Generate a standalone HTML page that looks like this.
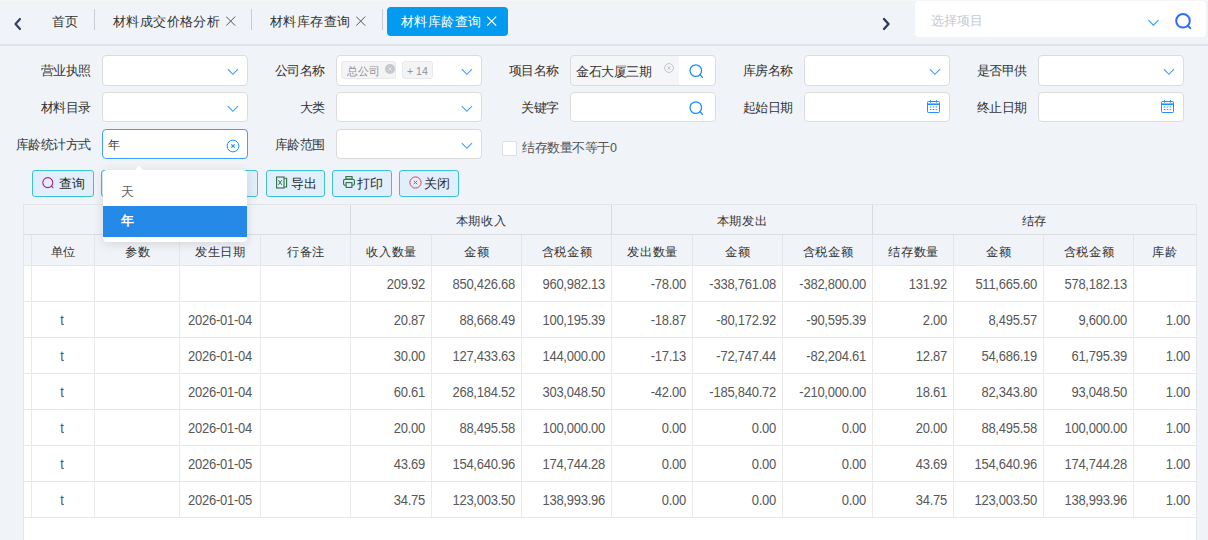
<!DOCTYPE html>
<html><head><meta charset="utf-8">
<style>
*{box-sizing:border-box;margin:0;padding:0}
html,body{width:1208px;height:540px;overflow:hidden;background:#f0f3f8;font-family:"Liberation Sans",sans-serif;color:#333;font-size:13px}
.a{position:absolute}
.tabtxt{top:13px;font-size:13px;line-height:18px;color:#333;white-space:nowrap;transform:scale(1.03);transform-origin:0 50%}
.sep{top:9px;width:1px;height:21px;background:#c9ccd2}
.x{width:10px;height:10px}
.lbl{font-size:13px;line-height:16px;color:#333;white-space:nowrap;text-align:right;width:120px;transform:scale(0.965);transform-origin:100% 50%}
.inp{width:146px;height:31px;background:#fff;border:1px solid #dcdcdc;border-radius:4px}
.btn{top:170px;height:27px;background:#e1eefb;border:1px solid #3cc3d6;border-radius:3px}
.btxt{top:176px;font-size:13px;line-height:16px;color:#2b2b2b;white-space:nowrap;transform:scale(0.97);transform-origin:0 50%}
.tbl{left:23px;top:204px;width:1174px;height:336px;background:#fff;border-left:1px solid #e5e6e8;border-top:1px solid #e5e6e8;border-right:1px solid #e5e6e8}
.hd{background:#f0f3f8}
.vl{width:1px;background:#e8e9eb}
.hl{height:1px;background:#e5e6e8}
.th{font-size:13px;line-height:16px;color:#333;white-space:nowrap;text-align:center;transform:scale(0.975,0.95);transform-origin:50% 40%}
.td{font-size:13px;line-height:16px;color:#585858;white-space:nowrap;letter-spacing:-0.25px;transform:scaleY(1.08);transform-origin:50% 78%}
</style></head><body>
<div class="a" style="left:0;top:0;width:1208px;height:1px;background:#f6f6f6"></div>
<div class="a" style="left:0;top:44px;width:1208px;height:2px;background:#dfe4ea"></div>
<svg class="a" style="left:12px;top:16px" width="12" height="16" viewBox="0 0 12 16"><path d="M8 3 L3.5 8 L8 13" fill="none" stroke="#3a4268" stroke-width="2.2" stroke-linecap="round" stroke-linejoin="round"/></svg>
<div class="a tabtxt" style="left:52px">首页</div>
<div class="a sep" style="left:94px"></div>
<div class="a tabtxt" style="left:113px">材料成交价格分析</div>
<svg class="a x" style="left:226px;top:16px" viewBox="0 0 10 10"><path d="M0.2 0.6L9.2 9.6M9.2 0.6L0.2 9.6" stroke="#555" stroke-width="1.0"/></svg>
<div class="a sep" style="left:251px"></div>
<div class="a tabtxt" style="left:270px">材料库存查询</div>
<svg class="a x" style="left:356px;top:16px" viewBox="0 0 10 10"><path d="M0.2 0.6L9.2 9.6M9.2 0.6L0.2 9.6" stroke="#555" stroke-width="1.0"/></svg>
<div class="a sep" style="left:382px"></div>
<div class="a" style="left:387px;top:7px;width:121px;height:29px;background:#039bef;border-radius:4px"></div>
<div class="a tabtxt" style="left:401px;color:#fff">材料库龄查询</div>
<svg class="a x" style="left:487px;top:16px" viewBox="0 0 10 10"><path d="M0.2 0.6L9.2 9.6M9.2 0.6L0.2 9.6" stroke="#fff" stroke-width="1.1"/></svg>
<svg class="a" style="left:880px;top:16px" width="12" height="16" viewBox="0 0 12 16"><path d="M4 3 L8.5 8 L4 13" fill="none" stroke="#2d3561" stroke-width="2.3" stroke-linecap="round" stroke-linejoin="round"/></svg>
<div class="a" style="left:915px;top:1px;width:291px;height:36px;background:#fff;border-radius:4px"></div>
<div class="a" style="left:931px;top:12px;font-size:12.8px;line-height:18px;color:#c6cad2">选择项目</div>
<svg class="a" style="left:1147px;top:19px" width="13" height="8" viewBox="0 0 13 8"><path d="M1.4 1.2L6.4 6.2L11.4 1.2" fill="none" stroke="#2a9dff" stroke-width="1.1"/></svg>
<svg class="a" style="left:1175px;top:13px" width="18" height="18" viewBox="0 0 18 18"><circle cx="8" cy="7.8" r="6.8" fill="none" stroke="#2f6bff" stroke-width="2"/><path d="M12.9 12.7L15.3 15.1" stroke="#2f6bff" stroke-width="2" stroke-linecap="round"/></svg>
<div class="a lbl" style="left:-29px;top:62.6px">营业执照</div>
<div class="a inp" style="left:102px;top:55px;height:31px"></div>
<svg class="a" style="left:227px;top:68px" width="13" height="8" viewBox="0 0 13 8"><path d="M0.8 1.2L5.9 6.3L11 1.2" fill="none" stroke="#409eff" stroke-width="1.15"/></svg>
<div class="a lbl" style="left:205px;top:62.6px">公司名称</div>
<div class="a inp" style="left:336px;top:55px;height:31px"></div>
<svg class="a" style="left:461px;top:68px" width="13" height="8" viewBox="0 0 13 8"><path d="M0.8 1.2L5.9 6.3L11 1.2" fill="none" stroke="#409eff" stroke-width="1.15"/></svg>
<div class="a lbl" style="left:439px;top:62.6px">项目名称</div>
<div class="a inp" style="left:570px;top:55px;height:31px;background:linear-gradient(90deg,#f5f6f8 0,#f5f6f8 108px,#fff 108px)"></div>
<svg class="a" style="left:689px;top:64px" width="15" height="15" viewBox="0 0 15 15"><circle cx="6.8" cy="6.6" r="5.8" fill="none" stroke="#1e90ff" stroke-width="1.3"/><path d="M10.8 10.6L13.4 13.2" stroke="#1e90ff" stroke-width="1.3" stroke-linecap="round"/></svg>
<div class="a lbl" style="left:673px;top:62.6px">库房名称</div>
<div class="a inp" style="left:804px;top:55px;height:31px"></div>
<svg class="a" style="left:929px;top:68px" width="13" height="8" viewBox="0 0 13 8"><path d="M0.8 1.2L5.9 6.3L11 1.2" fill="none" stroke="#409eff" stroke-width="1.15"/></svg>
<div class="a lbl" style="left:907px;top:62.6px">是否甲供</div>
<div class="a inp" style="left:1038px;top:55px;height:31px"></div>
<svg class="a" style="left:1163px;top:68px" width="13" height="8" viewBox="0 0 13 8"><path d="M0.8 1.2L5.9 6.3L11 1.2" fill="none" stroke="#409eff" stroke-width="1.15"/></svg>
<div class="a lbl" style="left:-29px;top:99.6px">材料目录</div>
<div class="a inp" style="left:102px;top:92px;height:30px"></div>
<svg class="a" style="left:227px;top:105px" width="13" height="8" viewBox="0 0 13 8"><path d="M0.8 1.2L5.9 6.3L11 1.2" fill="none" stroke="#409eff" stroke-width="1.15"/></svg>
<div class="a lbl" style="left:205px;top:99.6px">大类</div>
<div class="a inp" style="left:336px;top:92px;height:30px"></div>
<svg class="a" style="left:461px;top:105px" width="13" height="8" viewBox="0 0 13 8"><path d="M0.8 1.2L5.9 6.3L11 1.2" fill="none" stroke="#409eff" stroke-width="1.15"/></svg>
<div class="a lbl" style="left:439px;top:99.6px">关键字</div>
<div class="a inp" style="left:570px;top:92px;height:30px"></div>
<svg class="a" style="left:689px;top:101px" width="15" height="15" viewBox="0 0 15 15"><circle cx="6.8" cy="6.6" r="5.8" fill="none" stroke="#1e90ff" stroke-width="1.3"/><path d="M10.8 10.6L13.4 13.2" stroke="#1e90ff" stroke-width="1.3" stroke-linecap="round"/></svg>
<div class="a lbl" style="left:673px;top:99.6px">起始日期</div>
<div class="a inp" style="left:804px;top:92px;height:30px"></div>
<svg class="a" style="left:927px;top:100px" width="13" height="13" viewBox="0 0 13 13"><rect x="0.5" y="1.5" width="12" height="11" rx="0.8" fill="none" stroke="#1e90ff" stroke-width="1"/><path d="M0.5 4.2H12.5" stroke="#1e90ff" stroke-width="1.6"/><path d="M3.5 0.2V2.6M9.5 0.2V2.6" stroke="#1e90ff" stroke-width="1"/><path d="M2.8 7H4.4M5.7 7H7.3M8.6 7H10.2M2.8 9.5H4.4M5.7 9.5H7.3M8.6 9.5H10.2" stroke="#1e90ff" stroke-width="0.9"/></svg>
<div class="a lbl" style="left:907px;top:99.6px">终止日期</div>
<div class="a inp" style="left:1038px;top:92px;height:30px"></div>
<svg class="a" style="left:1161px;top:100px" width="13" height="13" viewBox="0 0 13 13"><rect x="0.5" y="1.5" width="12" height="11" rx="0.8" fill="none" stroke="#1e90ff" stroke-width="1"/><path d="M0.5 4.2H12.5" stroke="#1e90ff" stroke-width="1.6"/><path d="M3.5 0.2V2.6M9.5 0.2V2.6" stroke="#1e90ff" stroke-width="1"/><path d="M2.8 7H4.4M5.7 7H7.3M8.6 7H10.2M2.8 9.5H4.4M5.7 9.5H7.3M8.6 9.5H10.2" stroke="#1e90ff" stroke-width="0.9"/></svg>
<div class="a lbl" style="left:-29px;top:136.6px">库龄统计方式</div>
<div class="a inp" style="left:102px;top:129px;height:30px;border-color:#409eff"></div>
<div class="a lbl" style="left:205px;top:136.6px">库龄范围</div>
<div class="a inp" style="left:336px;top:129px;height:30px"></div>
<svg class="a" style="left:461px;top:142px" width="13" height="8" viewBox="0 0 13 8"><path d="M0.8 1.2L5.9 6.3L11 1.2" fill="none" stroke="#409eff" stroke-width="1.15"/></svg>
<div class="a" style="left:341px;top:61px;width:55px;height:18px;background:#f4f4f5;border:1px solid #e9e9eb;border-radius:3px"></div>
<div class="a" style="left:347px;top:63px;font-size:11px;line-height:16px;color:#909399">总公司</div>
<svg class="a" style="left:385px;top:64px" width="10" height="10" viewBox="0 0 10 10"><circle cx="5" cy="5" r="5" fill="#c4c7ce"/><path d="M3.3 3.3L6.7 6.7M6.7 3.3L3.3 6.7" stroke="#e8e9ec" stroke-width="0.9"/></svg>
<div class="a" style="left:402px;top:61px;width:31px;height:18px;background:#f4f4f5;border:1px solid #e9e9eb;border-radius:3px"></div>
<div class="a" style="left:407px;top:63px;font-size:10.5px;line-height:16px;color:#909399">+ 14</div>
<div class="a" style="left:576px;top:64px;font-size:13px;line-height:16px;color:#333;transform:scale(0.965);transform-origin:0 50%">金石大厦三期</div>
<svg class="a" style="left:664px;top:63px" width="10" height="10" viewBox="0 0 10 10"><circle cx="5" cy="5" r="4.4" fill="none" stroke="#c0c4cc" stroke-width="1"/><path d="M3.3 3.3L6.7 6.7M6.7 3.3L3.3 6.7" stroke="#c0c4cc" stroke-width="1"/></svg>
<div class="a" style="left:108px;top:137px;font-size:13px;line-height:16px;color:#333;transform:scale(0.94);transform-origin:0 60%">年</div>
<svg class="a" style="left:226px;top:139px" width="14" height="14" viewBox="0 0 14 14"><circle cx="7" cy="7" r="5.9" fill="none" stroke="#1e90ff" stroke-width="1"/><path d="M5.3 5.3L8.7 8.7M8.7 5.3L5.3 8.7" stroke="#1e90ff" stroke-width="1.1"/></svg>
<div class="a" style="left:502px;top:141px;width:15px;height:15px;background:#fff;border:1px solid #dcdfe6;border-radius:2px"></div>
<div class="a" style="left:522px;top:140px;font-size:13px;line-height:16px;color:#555;transform:scale(0.966);transform-origin:0 50%">结存数量不等于0</div>
<div class="a btn" style="left:32px;width:62px"></div>
<svg class="a" style="left:42px;top:177px" width="13" height="13" viewBox="0 0 13 13"><circle cx="5.8" cy="5.6" r="5" fill="none" stroke="#b0208f" stroke-width="1.1"/><path d="M9.4 9.2L10.9 10.7" stroke="#b0208f" stroke-width="1.1" stroke-linecap="round"/></svg>
<div class="a btxt" style="left:59px">查询</div>
<div class="a btn" style="left:101px;width:157px"></div>
<div class="a btn" style="left:266px;width:59px"></div>
<svg class="a" style="left:276px;top:176px" width="12" height="13" viewBox="0 0 12 13"><rect x="0.6" y="1" width="7.4" height="11" fill="none" stroke="#2f7044" stroke-width="1.1"/><path d="M8 2.2H10.6V11H8" fill="none" stroke="#2f7044" stroke-width="1.1"/><path d="M2.4 4.2L5.8 8.8M5.8 4.2L2.4 8.8" stroke="#2f7044" stroke-width="1"/></svg>
<div class="a btxt" style="left:291px">导出</div>
<div class="a btn" style="left:332px;width:60px"></div>
<svg class="a" style="left:343px;top:176px" width="12" height="12" viewBox="0 0 12 12"><rect x="2.9" y="0.6" width="6.2" height="2.6" fill="none" stroke="#2f7044" stroke-width="1.1"/><rect x="0.6" y="3.2" width="10.8" height="6" rx="1.5" fill="none" stroke="#2f7044" stroke-width="1.1"/><rect x="3.1" y="6.6" width="5.8" height="4.8" fill="#e1eefb" stroke="#2f7044" stroke-width="1.1"/></svg>
<div class="a btxt" style="left:357px">打印</div>
<div class="a btn" style="left:399px;width:60px"></div>
<svg class="a" style="left:409px;top:176px" width="13" height="13" viewBox="0 0 13 13"><circle cx="6.5" cy="6.5" r="5.6" fill="none" stroke="#f04040" stroke-width="1"/><path d="M4.8 4.8L8.2 8.2M8.2 4.8L4.8 8.2" stroke="#f04040" stroke-width="1"/></svg>
<div class="a btxt" style="left:424px">关闭</div>
<div class="a tbl"></div>
<div class="a hd" style="left:24px;top:205px;width:1172px;height:61px"></div>
<div class="a hl" style="left:24px;top:234px;width:1172px;background:#dcdde0"></div>
<div class="a hl" style="left:24px;top:265px;width:1172px"></div>
<div class="a hl" style="left:24px;top:301px;width:1172px"></div>
<div class="a hl" style="left:24px;top:337px;width:1172px"></div>
<div class="a hl" style="left:24px;top:373px;width:1172px"></div>
<div class="a hl" style="left:24px;top:409px;width:1172px"></div>
<div class="a hl" style="left:24px;top:445px;width:1172px"></div>
<div class="a hl" style="left:24px;top:481px;width:1172px"></div>
<div class="a hl" style="left:24px;top:517px;width:1172px"></div>
<div class="a vl" style="left:350px;top:205px;height:29px;background:#d9dadd"></div>
<div class="a vl" style="left:611px;top:205px;height:29px;background:#d9dadd"></div>
<div class="a vl" style="left:872px;top:205px;height:29px;background:#d9dadd"></div>
<div class="a vl" style="left:31px;top:235px;height:30px;background:#e4e6ea"></div>
<div class="a vl" style="left:31px;top:266px;height:251px;background:#ebebeb"></div>
<div class="a vl" style="left:94px;top:235px;height:30px;background:#e4e6ea"></div>
<div class="a vl" style="left:94px;top:266px;height:251px;background:#ebebeb"></div>
<div class="a vl" style="left:179px;top:235px;height:30px;background:#e4e6ea"></div>
<div class="a vl" style="left:179px;top:266px;height:251px;background:#ebebeb"></div>
<div class="a vl" style="left:260px;top:235px;height:30px;background:#e4e6ea"></div>
<div class="a vl" style="left:260px;top:266px;height:251px;background:#ebebeb"></div>
<div class="a vl" style="left:350px;top:235px;height:30px;background:#e4e6ea"></div>
<div class="a vl" style="left:350px;top:266px;height:251px;background:#ebebeb"></div>
<div class="a vl" style="left:431px;top:235px;height:30px;background:#e4e6ea"></div>
<div class="a vl" style="left:431px;top:266px;height:251px;background:#ebebeb"></div>
<div class="a vl" style="left:521px;top:235px;height:30px;background:#e4e6ea"></div>
<div class="a vl" style="left:521px;top:266px;height:251px;background:#ebebeb"></div>
<div class="a vl" style="left:611px;top:235px;height:30px;background:#e4e6ea"></div>
<div class="a vl" style="left:611px;top:266px;height:251px;background:#ebebeb"></div>
<div class="a vl" style="left:692px;top:235px;height:30px;background:#e4e6ea"></div>
<div class="a vl" style="left:692px;top:266px;height:251px;background:#ebebeb"></div>
<div class="a vl" style="left:782px;top:235px;height:30px;background:#e4e6ea"></div>
<div class="a vl" style="left:782px;top:266px;height:251px;background:#ebebeb"></div>
<div class="a vl" style="left:872px;top:235px;height:30px;background:#e4e6ea"></div>
<div class="a vl" style="left:872px;top:266px;height:251px;background:#ebebeb"></div>
<div class="a vl" style="left:953px;top:235px;height:30px;background:#e4e6ea"></div>
<div class="a vl" style="left:953px;top:266px;height:251px;background:#ebebeb"></div>
<div class="a vl" style="left:1043px;top:235px;height:30px;background:#e4e6ea"></div>
<div class="a vl" style="left:1043px;top:266px;height:251px;background:#ebebeb"></div>
<div class="a vl" style="left:1133px;top:235px;height:30px;background:#e4e6ea"></div>
<div class="a vl" style="left:1133px;top:266px;height:251px;background:#ebebeb"></div>
<div class="a th" style="left:351px;top:213px;width:260px;text-align:center">本期收入</div>
<div class="a th" style="left:612px;top:213px;width:260px;text-align:center">本期发出</div>
<div class="a th" style="left:873px;top:213px;width:323px;text-align:center">结存</div>
<div class="a th" style="left:32px;top:244px;width:63px;text-align:center">单位</div>
<div class="a th" style="left:95px;top:244px;width:85px;text-align:center">参数</div>
<div class="a th" style="left:180px;top:244px;width:81px;text-align:center">发生日期</div>
<div class="a th" style="left:261px;top:244px;width:90px;text-align:center">行备注</div>
<div class="a th" style="left:351px;top:244px;width:81px;text-align:center">收入数量</div>
<div class="a th" style="left:432px;top:244px;width:90px;text-align:center">金额</div>
<div class="a th" style="left:522px;top:244px;width:90px;text-align:center">含税金额</div>
<div class="a th" style="left:612px;top:244px;width:81px;text-align:center">发出数量</div>
<div class="a th" style="left:693px;top:244px;width:90px;text-align:center">金额</div>
<div class="a th" style="left:783px;top:244px;width:90px;text-align:center">含税金额</div>
<div class="a th" style="left:873px;top:244px;width:81px;text-align:center">结存数量</div>
<div class="a th" style="left:954px;top:244px;width:90px;text-align:center">金额</div>
<div class="a th" style="left:1044px;top:244px;width:90px;text-align:center">含税金额</div>
<div class="a th" style="left:1134px;top:244px;width:62px;text-align:center">库龄</div>
<div class="a td num" style="left:351px;top:277px;width:74px;text-align:right">209.92</div>
<div class="a td num" style="left:432px;top:277px;width:83px;text-align:right">850,426.68</div>
<div class="a td num" style="left:522px;top:277px;width:83px;text-align:right">960,982.13</div>
<div class="a td num" style="left:612px;top:277px;width:74px;text-align:right">-78.00</div>
<div class="a td num" style="left:693px;top:277px;width:83px;text-align:right">-338,761.08</div>
<div class="a td num" style="left:783px;top:277px;width:83px;text-align:right">-382,800.00</div>
<div class="a td num" style="left:873px;top:277px;width:74px;text-align:right">131.92</div>
<div class="a td num" style="left:954px;top:277px;width:83px;text-align:right">511,665.60</div>
<div class="a td num" style="left:1044px;top:277px;width:83px;text-align:right">578,182.13</div>
<div class="a td num" style="left:31px;top:313px;width:62px;text-align:center">t</div>
<div class="a td num" style="left:180px;top:313px;width:80px;text-align:center">2026-01-04</div>
<div class="a td num" style="left:351px;top:313px;width:74px;text-align:right">20.87</div>
<div class="a td num" style="left:432px;top:313px;width:83px;text-align:right">88,668.49</div>
<div class="a td num" style="left:522px;top:313px;width:83px;text-align:right">100,195.39</div>
<div class="a td num" style="left:612px;top:313px;width:74px;text-align:right">-18.87</div>
<div class="a td num" style="left:693px;top:313px;width:83px;text-align:right">-80,172.92</div>
<div class="a td num" style="left:783px;top:313px;width:83px;text-align:right">-90,595.39</div>
<div class="a td num" style="left:873px;top:313px;width:74px;text-align:right">2.00</div>
<div class="a td num" style="left:954px;top:313px;width:83px;text-align:right">8,495.57</div>
<div class="a td num" style="left:1044px;top:313px;width:83px;text-align:right">9,600.00</div>
<div class="a td num" style="left:1134px;top:313px;width:56px;text-align:right">1.00</div>
<div class="a td num" style="left:31px;top:349px;width:62px;text-align:center">t</div>
<div class="a td num" style="left:180px;top:349px;width:80px;text-align:center">2026-01-04</div>
<div class="a td num" style="left:351px;top:349px;width:74px;text-align:right">30.00</div>
<div class="a td num" style="left:432px;top:349px;width:83px;text-align:right">127,433.63</div>
<div class="a td num" style="left:522px;top:349px;width:83px;text-align:right">144,000.00</div>
<div class="a td num" style="left:612px;top:349px;width:74px;text-align:right">-17.13</div>
<div class="a td num" style="left:693px;top:349px;width:83px;text-align:right">-72,747.44</div>
<div class="a td num" style="left:783px;top:349px;width:83px;text-align:right">-82,204.61</div>
<div class="a td num" style="left:873px;top:349px;width:74px;text-align:right">12.87</div>
<div class="a td num" style="left:954px;top:349px;width:83px;text-align:right">54,686.19</div>
<div class="a td num" style="left:1044px;top:349px;width:83px;text-align:right">61,795.39</div>
<div class="a td num" style="left:1134px;top:349px;width:56px;text-align:right">1.00</div>
<div class="a td num" style="left:31px;top:385px;width:62px;text-align:center">t</div>
<div class="a td num" style="left:180px;top:385px;width:80px;text-align:center">2026-01-04</div>
<div class="a td num" style="left:351px;top:385px;width:74px;text-align:right">60.61</div>
<div class="a td num" style="left:432px;top:385px;width:83px;text-align:right">268,184.52</div>
<div class="a td num" style="left:522px;top:385px;width:83px;text-align:right">303,048.50</div>
<div class="a td num" style="left:612px;top:385px;width:74px;text-align:right">-42.00</div>
<div class="a td num" style="left:693px;top:385px;width:83px;text-align:right">-185,840.72</div>
<div class="a td num" style="left:783px;top:385px;width:83px;text-align:right">-210,000.00</div>
<div class="a td num" style="left:873px;top:385px;width:74px;text-align:right">18.61</div>
<div class="a td num" style="left:954px;top:385px;width:83px;text-align:right">82,343.80</div>
<div class="a td num" style="left:1044px;top:385px;width:83px;text-align:right">93,048.50</div>
<div class="a td num" style="left:1134px;top:385px;width:56px;text-align:right">1.00</div>
<div class="a td num" style="left:31px;top:421px;width:62px;text-align:center">t</div>
<div class="a td num" style="left:180px;top:421px;width:80px;text-align:center">2026-01-04</div>
<div class="a td num" style="left:351px;top:421px;width:74px;text-align:right">20.00</div>
<div class="a td num" style="left:432px;top:421px;width:83px;text-align:right">88,495.58</div>
<div class="a td num" style="left:522px;top:421px;width:83px;text-align:right">100,000.00</div>
<div class="a td num" style="left:612px;top:421px;width:74px;text-align:right">0.00</div>
<div class="a td num" style="left:693px;top:421px;width:83px;text-align:right">0.00</div>
<div class="a td num" style="left:783px;top:421px;width:83px;text-align:right">0.00</div>
<div class="a td num" style="left:873px;top:421px;width:74px;text-align:right">20.00</div>
<div class="a td num" style="left:954px;top:421px;width:83px;text-align:right">88,495.58</div>
<div class="a td num" style="left:1044px;top:421px;width:83px;text-align:right">100,000.00</div>
<div class="a td num" style="left:1134px;top:421px;width:56px;text-align:right">1.00</div>
<div class="a td num" style="left:31px;top:457px;width:62px;text-align:center">t</div>
<div class="a td num" style="left:180px;top:457px;width:80px;text-align:center">2026-01-05</div>
<div class="a td num" style="left:351px;top:457px;width:74px;text-align:right">43.69</div>
<div class="a td num" style="left:432px;top:457px;width:83px;text-align:right">154,640.96</div>
<div class="a td num" style="left:522px;top:457px;width:83px;text-align:right">174,744.28</div>
<div class="a td num" style="left:612px;top:457px;width:74px;text-align:right">0.00</div>
<div class="a td num" style="left:693px;top:457px;width:83px;text-align:right">0.00</div>
<div class="a td num" style="left:783px;top:457px;width:83px;text-align:right">0.00</div>
<div class="a td num" style="left:873px;top:457px;width:74px;text-align:right">43.69</div>
<div class="a td num" style="left:954px;top:457px;width:83px;text-align:right">154,640.96</div>
<div class="a td num" style="left:1044px;top:457px;width:83px;text-align:right">174,744.28</div>
<div class="a td num" style="left:1134px;top:457px;width:56px;text-align:right">1.00</div>
<div class="a td num" style="left:31px;top:493px;width:62px;text-align:center">t</div>
<div class="a td num" style="left:180px;top:493px;width:80px;text-align:center">2026-01-05</div>
<div class="a td num" style="left:351px;top:493px;width:74px;text-align:right">34.75</div>
<div class="a td num" style="left:432px;top:493px;width:83px;text-align:right">123,003.50</div>
<div class="a td num" style="left:522px;top:493px;width:83px;text-align:right">138,993.96</div>
<div class="a td num" style="left:612px;top:493px;width:74px;text-align:right">0.00</div>
<div class="a td num" style="left:693px;top:493px;width:83px;text-align:right">0.00</div>
<div class="a td num" style="left:783px;top:493px;width:83px;text-align:right">0.00</div>
<div class="a td num" style="left:873px;top:493px;width:74px;text-align:right">34.75</div>
<div class="a td num" style="left:954px;top:493px;width:83px;text-align:right">123,003.50</div>
<div class="a td num" style="left:1044px;top:493px;width:83px;text-align:right">138,993.96</div>
<div class="a td num" style="left:1134px;top:493px;width:56px;text-align:right">1.00</div>
<div class="a" style="left:103px;top:170px;width:144px;height:72px;background:#fff;border-radius:4px;box-shadow:0 2px 12px rgba(0,0,0,0.12)"></div>
<svg class="a" style="left:133px;top:165px" width="12" height="6" viewBox="0 0 12 6"><path d="M1.2 6L6 0.6L10.8 6Z" fill="#fff"/></svg>
<div class="a" style="left:121px;top:184px;font-size:13px;line-height:16px;color:#606266">天</div>
<div class="a" style="left:103px;top:206px;width:144px;height:31px;background:#2589e8"></div>
<div class="a" style="left:121px;top:213px;font-size:13px;line-height:16px;color:#fff;font-weight:bold">年</div>
</body></html>
